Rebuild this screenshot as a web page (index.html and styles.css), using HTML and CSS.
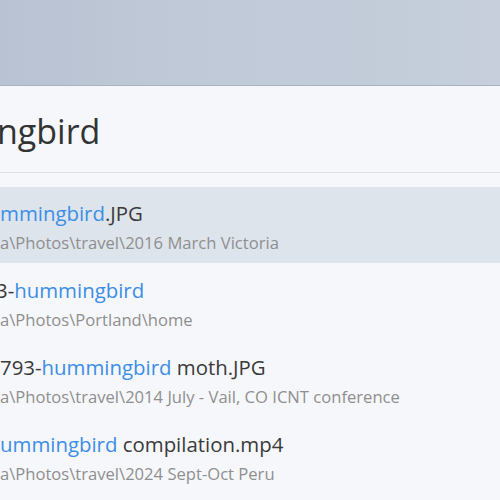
FILE: index.html
```html
<!DOCTYPE html>
<html lang="en">
<head>
    <meta charset="UTF-8">
    <meta name="viewport" content="width=device-width, initial-scale=1.0">
    <title>Search</title>
    <link rel="stylesheet" href="styles.css">
</head>
<body>
    <div class="backdrop"></div>
    <div class="palette">
        <div class="search">
            <div class="query cut-lg">ngbird</div>
        </div>
        <div class="results">
            <div class="result selected">
                <div class="name"><span class="hit">mmingbird</span>.JPG</div>
                <div class="path">a\Photos\travel\2016 March Victoria</div>
            </div>
            <div class="result">
                <div class="name cut-sm">3-<span class="hit">hummingbird</span></div>
                <div class="path">a\Photos\Portland\home</div>
            </div>
            <div class="result">
                <div class="name">793-<span class="hit">hummingbird</span> moth.JPG</div>
                <div class="path">a\Photos\travel\2014 July - Vail, CO ICNT conference</div>
            </div>
            <div class="result">
                <div class="name"><span class="hit">ummingbird</span> compilation.mp4</div>
                <div class="path">a\Photos\travel\2024 Sept-Oct Peru</div>
            </div>
        </div>
    </div>
</body>
</html>
```
FILE: styles.css
```css
html, body {
    margin: 0;
    padding: 0;
}

body {
    width: 500px;
    height: 500px;
    overflow: hidden;
    background: #f6f7fb;
    font-family: "Open Sans", "Noto Sans", sans-serif;
}

.backdrop {
    height: 85px;
    background: linear-gradient(90deg, #b8c2d3 0%, #bec8d6 30%, #c1cbd9 60%, #c6cfdb 100%);
    border-bottom: 1px solid #a8b2c1;
}

.palette {
    background: #f6f7fb;
    overflow: hidden;
}

.search {
    padding: 25px 0 21px 0;
    border-bottom: 1px solid #dedfe3;
}

.query {
    font-size: 34px;
    line-height: 40px;
    color: #333;
    white-space: nowrap;
}

.cut-lg {
    margin-left: -3px;
}

.cut-sm {
    margin-left: -4px;
}

.results {
    padding-top: 14px;
}

.result {
    height: 76px;
    margin-bottom: 1px;
    box-sizing: border-box;
    padding-top: 13px;
    white-space: nowrap;
}

.result.selected {
    background: #dde4ec;
}

.name {
    font-size: 20.4px;
    line-height: 26px;
    color: #3a3a3a;
}

.hit {
    color: #3b8ee6;
}

.path {
    margin-top: 6px;
    font-size: 16.6px;
    line-height: 22px;
    color: #8f8f8f;
}
```
